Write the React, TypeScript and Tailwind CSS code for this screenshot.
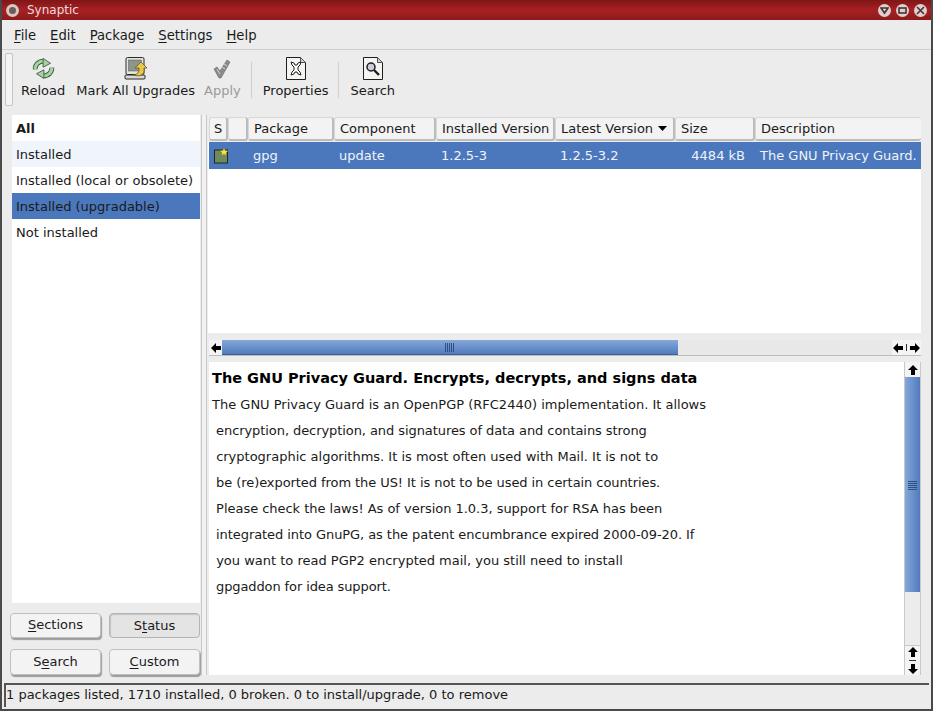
import type { ReactNode } from 'react';

const filters = [
  { label: 'All', className: 'font-bold bg-white' },
  { label: 'Installed', className: 'bg-[#eff5fb]' },
  { label: 'Installed (local or obsolete)', className: 'bg-white' },
  { label: 'Installed (upgradable)', className: 'bg-[#4b78bd]' },
  { label: 'Not installed', className: 'bg-white' },
];

const columns = [
  { label: 'S', width: 'w-[19px]' },
  { label: '', width: 'w-[20px]' },
  { label: 'Package', width: 'w-[86px]' },
  { label: 'Component', width: 'w-[102px]' },
  { label: 'Installed Version', width: 'w-[119px]' },
  { label: 'Latest Version', width: 'w-[120px]', sorted: true },
  { label: 'Size', width: 'w-[80px]' },
  { label: 'Description', width: 'flex-1' },
];

// tracking per line: the reference's hinted glyphs run a little narrower on some lines
const description = [
  { text: 'The GNU Privacy Guard is an OpenPGP (RFC2440) implementation. It allows', tracking: '' },
  { text: ' encryption, decryption, and signatures of data and contains strong', tracking: 'tracking-[-0.075px]' },
  { text: ' cryptographic algorithms. It is most often used with Mail. It is not to', tracking: '' },
  { text: ' be (re)exported from the US! It is not to be used in certain countries.', tracking: 'tracking-[-0.07px]' },
  { text: ' Please check the laws! As of version 1.0.3, support for RSA has been', tracking: 'tracking-[-0.03px]' },
  { text: ' integrated into GnuPG, as the patent encumbrance expired 2000-09-20. If', tracking: 'tracking-[-0.07px]' },
  { text: ' you want to read PGP2 encrypted mail, you still need to install', tracking: '' },
  { text: ' gpgaddon for idea support.', tracking: 'tracking-[-0.11px]' },
];

function Mnemonic({ before = '', letter, after }: { before?: string; letter: string; after: string }) {
  return (
    <span>
      {before}
      <span className="underline underline-offset-2">{letter}</span>
      {after}
    </span>
  );
}

function WindowButton({ children }: { children: ReactNode }) {
  return (
    <div className="w-[13px] h-[13px] rounded-full bg-[#e0cfcf] flex items-center justify-center">
      <svg width="9" height="9" viewBox="0 0 9 9" fill="none" stroke="#4a3030" strokeWidth="1.6">
        {children}
      </svg>
    </div>
  );
}

function ReloadArrow() {
  return (
    <>
      <path d="M3.5 13A9.5 9 0 0 1 13 3.5" fill="none" stroke="#3c5a3e" strokeWidth="5.5" />
      <path d="M3.5 13A9.5 9 0 0 1 13 3.5" fill="none" stroke="#a6d3a0" strokeWidth="3.5" />
      <path d="M12.5 0.5l8.5 5.5-8.5 4.5z" fill="#a6d3a0" stroke="#3c5a3e" strokeWidth="1" />
    </>
  );
}

function ReloadIcon() {
  return (
    <svg width="25" height="21" viewBox="0 0 26 24">
      <ReloadArrow />
      <g transform="rotate(180 13 12)">
        <ReloadArrow />
      </g>
    </svg>
  );
}

function UpgradesIcon() {
  return (
    <svg width="24" height="23" viewBox="0 0 24 23">
      <rect x="2" y="0.5" width="18" height="17" rx="1.5" fill="#e4e4e0" stroke="#2a2a2a" />
      <rect x="4.5" y="3" width="13" height="11" fill="#8d948c" stroke="#555" strokeWidth="0.5" />
      <rect x="1" y="18" width="20" height="4" rx="1" fill="#d8d8d4" stroke="#2a2a2a" />
      <path d="M17 5l6 6h-3v3c0 4-5 6-10 4 3-1 5-2 5-5v-2h-4z" fill="#e8c84a" stroke="#6b5714" strokeWidth="0.8" />
    </svg>
  );
}

function ApplyIcon() {
  return (
    <svg width="20" height="20" viewBox="0 0 20 20">
      <path d="M2 10l3-2 3 4 7-11 3 2-9 16h-2z" fill="#8a8a8a" stroke="#666" strokeWidth="0.6" />
      <path d="M5 10l3 5M12 5l3 2M10 8l3 2" stroke="#d4d4d4" strokeWidth="1" />
    </svg>
  );
}

function PropertiesIcon() {
  return (
    <svg width="22" height="25" viewBox="0 0 22 25">
      <path d="M1.5 1.5h14l5 5v17h-19z" fill="#f4f4f2" stroke="#1e1e1e" />
      <path d="M15.5 1.5v5h5z" fill="#cfcfcb" stroke="#555" />
      <path d="M6 6l3 1 1 2 2 0 1-2 3-1-1 3-2 2v3l2 2 1 3-3-1-1-2h-2l-1 2-3 1 1-3 2-2v-3l-2-2z" fill="#fff" stroke="#1e1e1e" />
    </svg>
  );
}

function SearchIcon() {
  return (
    <svg width="22" height="25" viewBox="0 0 22 25">
      <path d="M1.5 1.5h14l5 5v17h-19z" fill="#f4f4f2" stroke="#1e1e1e" />
      <path d="M15.5 1.5v5h5z" fill="#cfcfcb" stroke="#555" />
      <circle cx="9" cy="11" r="4" fill="#c9cfd4" stroke="#1e1e1e" strokeWidth="1.5" />
      <path d="M12 14l5 5" stroke="#1e1e1e" strokeWidth="2.4" />
    </svg>
  );
}

function ToolButton({ icon, label, disabled }: { icon: ReactNode; label: string; disabled?: boolean }) {
  return (
    <div className={`flex flex-col items-center ${disabled ? 'text-[#9a9a9a]' : 'text-[#1a1a1a]'}`}>
      <div className="h-[27px] mt-px flex items-center justify-center">{icon}</div>
      <span className="leading-[18px]">{label}</span>
    </div>
  );
}

function ToolSeparator() {
  return <div className="w-px h-[36px] bg-[#cfcfcf] mt-[8px] ml-[10px] mr-[11px]" />;
}

function SideButton({ children, pressed }: { children: ReactNode; pressed?: boolean }) {
  return (
    <div
      className={`w-[91px] rounded-[4px] border flex items-center justify-center ${
        pressed
          ? 'bg-[#e4e4e4] border-[#b4b4b4] shadow-[inset_1px_1px_1px_#c4c4c4] pt-px'
          : 'bg-[#f3f3f3] border-[#c0c0c0] shadow-[1px_2px_1px_#9c9c9c] pb-px'
      }`}
    >
      {children}
    </div>
  );
}

function ArrowIcon({ dir }: { dir: 'left' | 'right' | 'up' | 'down' }) {
  const paths = {
    left: 'M0 5l5-5v3h5v4H5v3z',
    right: 'M10 5L5 0v3H0v4h5v3z',
    up: 'M5 0l5 5H7v5H3V5H0z',
    down: 'M5 10l5-5H7V0H3v5H0z',
  };
  return (
    <svg width="10" height="10" viewBox="0 0 10 10" fill="#000">
      <path d={paths[dir]} />
    </svg>
  );
}

export default function App() {
  return (
    <div
      className="w-[933px] h-[711px] flex flex-col overflow-hidden bg-[#ececec] text-[13px] text-[#1a1a1a] border-x-2 border-b-2 border-[#4a4a4a]"
      style={{ fontFamily: '"DejaVu Sans", sans-serif' }}
    >
      {/* Title bar */}
      <div className="h-[20px] -mx-[2px] shrink-0 flex items-center pl-[6px] pr-[6px] bg-gradient-to-b from-[#7f1616] via-[#a82024] to-[#8c1a1c] text-[#ecdcdc] text-[12px]">
        <div className="w-[13px] h-[13px] rounded-full bg-[#d8c8c0] flex items-center justify-center">
          <div className="w-[7px] h-[7px] rounded-full bg-[#6e5a5a]" />
        </div>
        <span className="ml-[8px]">Synaptic</span>
        <div className="ml-auto flex gap-[5px]">
          <WindowButton>
            <path d="M1 2h7L4.5 7z" />
          </WindowButton>
          <WindowButton>
            <rect x="1" y="2" width="7" height="5" />
          </WindowButton>
          <WindowButton>
            <path d="M1 1l7 7M8 1l-7 7" />
          </WindowButton>
        </div>
      </div>

      {/* Menu bar */}
      <div className="h-[30px] shrink-0 flex items-center gap-[14px] pl-[12px] pt-[2px] text-[13.2px] border-b border-[#cfcfcf]">
        <Mnemonic letter="F" after="ile" />
        <Mnemonic letter="E" after="dit" />
        <Mnemonic letter="P" after="ackage" />
        <Mnemonic letter="S" after="ettings" />
        <Mnemonic letter="H" after="elp" />
      </div>

      {/* Toolbar */}
      <div className="h-[59px] shrink-0 flex items-start pt-[2px] pl-[3px] mt-px">
        <div className="w-[8px] h-[53px] bg-[#f4f4f4] border border-[#c4c4c4] rounded-[2px] mr-[8px]" />
        <div className="flex items-start pt-[1px]">
          <ToolButton icon={<ReloadIcon />} label="Reload" />
          <div className="w-[11px]" />
          <ToolButton icon={<UpgradesIcon />} label="Mark All Upgrades" />
          <div className="w-[9px]" />
          <ToolButton icon={<ApplyIcon />} label="Apply" disabled />
          <ToolSeparator />
          <ToolButton icon={<PropertiesIcon />} label="Properties" />
          <ToolSeparator />
          <ToolButton icon={<SearchIcon />} label="Search" />
        </div>
      </div>

      {/* Main area */}
      <div className="flex-1 flex min-h-0 pl-[8px] pr-[10px]">
        {/* Filter column */}
        <div className="w-[190px] shrink-0 flex flex-col">
          <div className="flex-1 ml-[2px] w-[188px] bg-white mt-[5px]">
            {filters.map((f) => (
              <div key={f.label} className={`h-[26px] flex items-center pl-[4px] pt-px ${f.className}`}>
                {f.label}
              </div>
            ))}
          </div>
          <div className="flex gap-[8px] h-[25px] mt-[10px]">
            <SideButton>
              <Mnemonic letter="S" after="ections" />
            </SideButton>
            <SideButton pressed>
              <Mnemonic before="S" letter="t" after="atus" />
            </SideButton>
          </div>
          <div className="flex gap-[8px] h-[26px] mt-[11px] mb-[8px]">
            <SideButton>
              <Mnemonic before="S" letter="e" after="arch" />
            </SideButton>
            <SideButton>
              <Mnemonic letter="C" after="ustom" />
            </SideButton>
          </div>
        </div>

        {/* Pane handle */}
        <div className="w-[6px] mx-[1px] shrink-0 mt-[5px] mb-[8px] bg-[#f2f2f2] border-x border-[#c8c8c8]" />

        {/* Right column */}
        <div className="flex-1 min-w-0 flex flex-col">
          <div className="h-[223px] shrink-0 pt-[7px] flex flex-col">
            <div className="flex h-[25px] pl-px shrink-0">
              {columns.map((c) => (
                <div
                  key={c.label || 'blank'}
                  className={`${c.width} h-[24px] flex items-center ${c.label === 'S' ? 'pl-[4px]' : 'pl-[5px]'} bg-[#f3f3f3] rounded-[3px] border-t border-l border-t-[#d8d8d8] border-l-[#d8d8d8] border-b-2 border-b-[#bcbcbc] ${c.label === 'Description' ? '' : 'border-r-2 border-r-[#bcbcbc]'}`}
                >
                  {c.label}
                  {c.sorted && (
                    <svg width="9" height="5" viewBox="0 0 9 5" className="ml-[5px]">
                      <path d="M0 0h9L4.5 5z" fill="#000" />
                    </svg>
                  )}
                </div>
              ))}
            </div>
            <div className="flex-1 bg-white">
              <div className="h-[27px] flex items-center ml-px bg-[#4b78bd] text-[#f0f4fa]">
                <div className="w-[39px] flex pl-[5px]">
                  <svg width="15" height="16" viewBox="0 0 15 16">
                    <rect x="0.5" y="2" width="13" height="13" fill="#6f8a5c" stroke="#1c2a1c" />
                    <path d="M10 0l1.2 2.6 2.8.3-2 2 .5 2.8-2.5-1.4-2.5 1.4.5-2.8-2-2 2.8-.3z" fill="#f5e44c" stroke="#8a7a1c" strokeWidth="0.5" />
                  </svg>
                </div>
                <div className="w-[86px] pl-[5px]">gpg</div>
                <div className="w-[102px] pl-[5px]">update</div>
                <div className="w-[119px] pl-[5px]">1.2.5-3</div>
                <div className="w-[120px] pl-[5px]">1.2.5-3.2</div>
                <div className="w-[80px] pr-[10px] text-right">4484 kB</div>
                <div className="flex-1 pl-[5px] whitespace-nowrap overflow-hidden">The GNU Privacy Guard.</div>
              </div>
            </div>
          </div>

          {/* Horizontal scrollbar */}
          <div className="h-[7px] shrink-0" />
          <div className="h-[16px] shrink-0 flex items-center ml-px bg-[#e8e8e8] border-b border-[#bdbdbd]">
            <div className="w-[13px] h-[15px] flex items-center justify-center bg-[#f4f4f4]">
              <ArrowIcon dir="left" />
            </div>
            <div className="w-[456px] h-[15px] flex items-center justify-center bg-gradient-to-b from-[#86a8d8] to-[#4f7bbf] border-b border-[#3f5f90]">
              <div className="w-[10px] h-[9px] bg-[repeating-linear-gradient(90deg,#2f4f80_0,#2f4f80_1px,transparent_1px,transparent_2px)]" />
            </div>
            <div className="flex-1" />
            <div className="w-[29px] h-[15px] flex items-center justify-between px-px bg-[#f4f4f4]">
              <ArrowIcon dir="left" />
              <div className="w-px h-[7px] bg-[#333]" />
              <ArrowIcon dir="right" />
            </div>
          </div>
          <div className="h-[6px] shrink-0" />

          {/* Description */}
          <div className="flex-1 min-h-0 flex bg-white mb-[8px] ml-px">
            <div className="flex-1 min-w-0 pl-[3px] pt-[2px]">
              <div className="h-[28px] pt-[2px] flex items-center text-[14.5px] font-bold text-black">
                The GNU Privacy Guard. Encrypts, decrypts, and signs data
              </div>
              {description.map((line) => (
                <div key={line.text} className={`h-[26px] flex items-center whitespace-pre ${line.tracking}`}>
                  {line.text}
                </div>
              ))}
            </div>
            <div className="w-[17px] shrink-0 flex flex-col bg-[#ececec] border-x border-[#c8c8c8]">
              <div className="h-[15px] flex items-center justify-center bg-[#f4f4f4]">
                <ArrowIcon dir="up" />
              </div>
              <div className="h-[215px] flex items-center justify-center bg-gradient-to-r from-[#86a8d8] to-[#4f7bbf]">
                <div className="w-[9px] h-[10px] bg-[repeating-linear-gradient(0deg,#2f4f80_0,#2f4f80_1px,transparent_1px,transparent_2px)]" />
              </div>
              <div className="flex-1" />
              <div className="h-[30px] flex flex-col items-center justify-between py-px bg-[#f4f4f4] border-t border-[#c8c8c8]">
                <ArrowIcon dir="up" />
                <div className="h-px w-[7px] bg-[#333]" />
                <ArrowIcon dir="down" />
              </div>
            </div>
          </div>
        </div>
      </div>

      {/* Status bar */}
      <div className="h-[24px] mb-[2px] pb-[2px] shrink-0 mx-[2px] flex items-center border-t-2 border-l-2 border-[#555] bg-[#ececec] whitespace-nowrap">
        1 packages listed, 1710 installed, 0 broken. 0 to install/upgrade, 0 to remove
      </div>
    </div>
  );
}
